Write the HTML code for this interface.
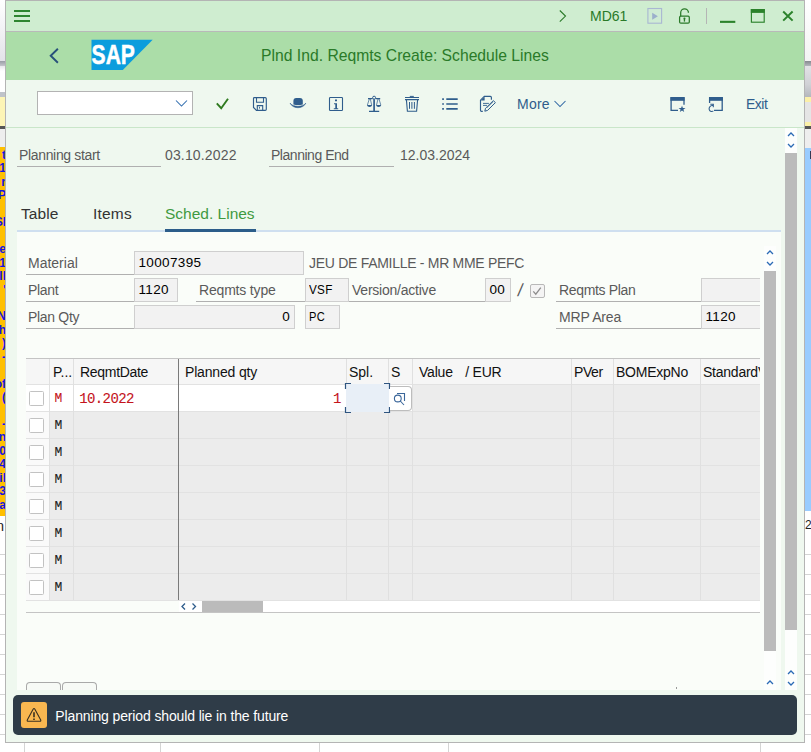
<!DOCTYPE html>
<html><head><meta charset="utf-8">
<style>
html,body{margin:0;padding:0;}
body{width:811px;height:752px;position:relative;overflow:hidden;background:#fff;font-family:"Liberation Sans",sans-serif;font-size:14px;color:#555;}
.a{position:absolute;}
.t{position:absolute;white-space:nowrap;line-height:16px;}
.lbl{color:#5a5a5a;}
.ul{position:absolute;height:1px;background:#b0b0b0;}
.fld{position:absolute;box-sizing:border-box;background:#f2f2f2;border:1px solid #cfcfcf;height:24px;color:#000;line-height:21.200px;padding:0 4px 0 3.500px;font-size:13.500px;letter-spacing:0.350px;white-space:nowrap;overflow:hidden;}
.hd{position:absolute;top:364.400px;color:#111;white-space:nowrap;line-height:16px;}
.m{position:absolute;left:54.600px;font-family:"Liberation Mono",monospace;font-size:13px;color:#111;line-height:16px;-webkit-text-stroke:0.100px currentColor;}
.cb{position:absolute;left:29px;width:14.500px;height:14.500px;box-sizing:border-box;border:1px solid #c2c2c2;border-radius:1.500px;background:#fff;}
.vl{position:absolute;width:1px;background:#e0e0e0;}
.hl{position:absolute;height:1px;background:#e2e2e2;}
</style></head><body>

<!-- ===== desktop background (spreadsheet) ===== -->
<div id="bg">
 <!-- left strip -->
 <div class="a" style="left:0;top:0;width:6px;height:62px;background:linear-gradient(#ffffff,#f4f4f7 40%,#e2e2e8)"></div>
 <div class="a" style="left:0;top:61px;width:6px;height:5px;background:linear-gradient(#9a9ea6,#c4c6cc)"></div>
 <div class="a" style="left:0;top:66px;width:6px;height:25px;background:linear-gradient(#e8e8ec,#ffffff 5px)"></div>
 <div class="a" style="left:0;top:91.500px;width:6px;height:6px;background:#bfc3c9"></div>
 <div class="a" style="left:0;top:97.300px;width:6px;height:29px;background:#fdf5b6"></div>
 <div class="a" style="left:0;top:126px;width:6px;height:3px;background:#555"></div>
 <div class="a" style="left:0;top:129px;width:6px;height:19px;background:#eee"></div>
 <div class="a" style="left:0;top:147.400px;width:6px;height:369.100px;background:#ffc000"></div>
 <!-- right strip -->
 <div class="a" style="left:804px;top:0;width:7px;height:62px;background:linear-gradient(#ffffff,#f3f3f3)"></div>
 <div class="a" style="left:804px;top:61px;width:7px;height:5px;background:linear-gradient(#85898f,#b3b6bc)"></div>
 <div class="a" style="left:804px;top:66px;width:7px;height:31px;background:linear-gradient(#e2e2e6,#d0d1d5 60%,#b4b7bd)"></div>
 <div class="a" style="left:804px;top:97px;width:7px;height:5px;background:#fbf0a8"></div>
 <div class="a" style="left:804px;top:102px;width:7px;height:20px;background:#e5e5e5"></div>
 <div class="a" style="left:804px;top:122px;width:7px;height:4px;background:#fbf0a8"></div>
 <div class="a" style="left:804px;top:126px;width:7px;height:3px;background:#555"></div>
 <div class="a" style="left:804px;top:129px;width:7px;height:19px;background:#eeeeee"></div>
 <div class="a" style="left:804px;top:147.500px;width:7px;height:363.500px;background:#99ccff"></div>
<div class="a" style="left:0;top:147px;width:5px;height:369px;overflow:hidden;font-weight:bold;font-size:12px;color:#1515e0;">
<div class="a" style="right:-1px;top:0.0px;line-height:16px;white-space:nowrap;">t</div>
<div class="a" style="right:-1px;top:13.4px;line-height:16px;white-space:nowrap;">.1</div>
<div class="a" style="right:-1px;top:26.9px;line-height:16px;white-space:nowrap;">r</div>
<div class="a" style="right:-1px;top:40.3px;line-height:16px;white-space:nowrap;">P</div>
<div class="a" style="right:-1px;top:67.2px;line-height:16px;white-space:nowrap;">SI</div>
<div class="a" style="right:-1px;top:94.1px;line-height:16px;white-space:nowrap;">e</div>
<div class="a" style="right:-1px;top:107.6px;line-height:16px;white-space:nowrap;">1</div>
<div class="a" style="right:-1px;top:121.1px;line-height:16px;white-space:nowrap;">ll</div>
<div class="a" style="right:-1px;top:134.5px;line-height:16px;white-space:nowrap;">'</div>
<div class="a" style="right:-1px;top:161.4px;line-height:16px;white-space:nowrap;">N</div>
<div class="a" style="right:-1px;top:174.9px;line-height:16px;white-space:nowrap;">h</div>
<div class="a" style="right:-1px;top:188.3px;line-height:16px;white-space:nowrap;">)</div>
<div class="a" style="right:-1px;top:201.8px;line-height:16px;white-space:nowrap;">-</div>
<div class="a" style="right:-1px;top:228.6px;line-height:16px;white-space:nowrap;">of</div>
<div class="a" style="right:-1px;top:242.1px;line-height:16px;white-space:nowrap;">(</div>
<div class="a" style="right:-1px;top:269.0px;line-height:16px;white-space:nowrap;">-</div>
<div class="a" style="right:-1px;top:282.4px;line-height:16px;white-space:nowrap;">n</div>
<div class="a" style="right:-1px;top:295.9px;line-height:16px;white-space:nowrap;">0</div>
<div class="a" style="right:-1px;top:309.3px;line-height:16px;white-space:nowrap;">4</div>
<div class="a" style="right:-1px;top:322.8px;line-height:16px;white-space:nowrap;">il</div>
<div class="a" style="right:-1px;top:336.2px;line-height:16px;white-space:nowrap;">3</div>
<div class="a" style="right:-1px;top:349.7px;line-height:16px;white-space:nowrap;">a</div>
</div>
<div class="a" style="left:0;top:518px;width:5px;height:16px;overflow:hidden;font-size:14px;color:#222;"><div class="a" style="right:1px;top:0;line-height:16px;">n</div></div>
<div class="a" style="left:805px;top:517px;width:6px;height:16px;overflow:hidden;font-size:12px;color:#222;"><div class="a" style="left:0px;top:0;line-height:16px;">20</div></div>
<div class="a" style="left:809.500px;top:151px;width:1.500px;height:8px;background:#333a55"></div>
</div>

<!-- ===== SAP window ===== -->
<div id="win" class="a" style="left:5px;top:0;width:800px;height:743px;box-sizing:border-box;border:1px solid #b4b4b4;background:#eff8ef;"></div>
<div class="a" style="left:6px;top:1px;width:798px;height:30px;background:#cfedd0"></div>
<div class="a" style="left:6px;top:31px;width:798px;height:1px;background:#b9b9b9"></div>
<div class="a" style="left:6px;top:32px;width:798px;height:48px;background:#abdda8"></div>
<div class="a" style="left:6px;top:127px;width:798px;height:1px;background:#c9e6c9"></div>


<!-- ===== title bar ===== -->
<svg class="a" style="left:0;top:0" width="811" height="32" viewBox="0 0 811 32">
 <g stroke="#2a7a28" stroke-width="1.6" fill="none">
  <path d="M14 11.100H30M14 16.100H30M14 21H30" stroke-width="2" stroke="#2e8530"/>
  <path d="M559.800 10.500L565.500 16.100L559.800 21.700" stroke-width="1.100"/>
 </g>
 <rect x="647.900" y="8.500" width="13.700" height="14.700" fill="#cfecd4" stroke="#a9b7d2" stroke-width="1.100"/>
 <path d="M652.200 12.700L657.900 16.200L652.200 19.800Z" fill="#9cb0cc"/>
 <g stroke="#2a7a28" fill="none" stroke-width="1.250">
  <rect x="679.600" y="16.200" width="9.700" height="6.900" rx="1.200"/>
  <path d="M680.700 16V12.700a3.850 3.850 0 0 1 7.700 0V11.600"/>
 </g>
 <circle cx="684.450" cy="18.600" r="1.050" fill="#2a7a28"/>
 <path d="M684.450 19V21.600" stroke="#2a7a28" stroke-width="1.300"/>
 <rect x="706" y="8" width="1" height="16" fill="#b5b5b5"/>
 <rect x="720" y="20.800" width="15.300" height="2.100" fill="#2b822b"/>
 <rect x="751.400" y="9.600" width="12.800" height="12.600" fill="none" stroke="#2b822b" stroke-width="1.150"/>
 <rect x="750.800" y="9" width="14" height="3.900" fill="#2b822b"/>
 <path d="M783.200 11.500L792.600 20.600M792.600 11.500L783.200 20.600" stroke="#2b822b" stroke-width="2" fill="none"/>
</svg>
<div class="t" style="left:590px;top:8px;color:#2a7a28;font-size:14px;">MD61</div>

<!-- ===== header ===== -->
<svg class="a" style="left:0;top:32px" width="811" height="48" viewBox="0 32 811 48">
 <path d="M57.900 48.800L50.700 55.800L57.900 62.800" stroke="#28507a" stroke-width="1.900" fill="none"/>
 <path d="M91.500 39.700H152.700L122.800 70H91.500Z" fill="#0b9ddd"/>
 <text x="91.600" y="64.100" font-family="Liberation Sans, sans-serif" font-weight="bold" font-size="26.800" fill="#fff" stroke="#fff" stroke-width="0.500" textLength="43.300" lengthAdjust="spacingAndGlyphs">SAP</text>
</svg>
<div class="t" style="left:6px;width:798px;top:46px;text-align:center;color:#2a7a28;font-size:15.7px;line-height:20px;">Plnd Ind. Reqmts Create: Schedule Lines</div>


<!-- ===== toolbar ===== -->
<div class="a" style="left:37px;top:91px;width:156px;height:24px;box-sizing:border-box;border:1px solid #b3b3b3;background:#fff;"></div>
<svg class="a" style="left:0;top:80px" width="811" height="48" viewBox="0 80 811 48">
 <path d="M176 100.500L181.500 106L187 100.500" stroke="#2f6cae" stroke-width="1.050" fill="none"/>
 <!-- check -->
 <path d="M216.800 103.400L221.200 108.200L228 98.700" stroke="#2f7a1f" stroke-width="1.900" fill="none"/>
 <g stroke="#2f5d8c" fill="none" stroke-width="1.2">
  <!-- save -->
  <path d="M254.300 97.600H265.200Q266.300 97.600 266.300 98.700V109.200Q266.300 110.300 265.200 110.300H256.400L253.500 107.400V98.400Q253.500 97.600 254.300 97.600Z" stroke-width="1.150"/>
  <path d="M256.500 97.600V102.300H263.500V97.600" stroke-width="1.100"/>
  <path d="M257.300 110.300V105.600H262.700V110.300" stroke-width="1.100"/>
  <path d="M259.500 106.800V108.600" stroke-width="0.900"/>
  <!-- info -->
  <rect x="329.500" y="97.500" width="13" height="13" rx="0.800" stroke-width="1.100"/>
  <!-- scale -->
  <path d="M374.100 99.300V111" stroke-width="1.700"/>
  <path d="M369 111.300H379.200M368 98.600H372.600M375.600 98.600H380.200" stroke-width="1.200"/>
  <circle cx="374.100" cy="97.700" r="1.500" stroke-width="1"/>
  <path d="M369.300 99L367.400 105M370.300 99L371.700 105M378 99L376.500 105M379 99L380.800 105" stroke-width="0.700"/>
  <!-- trash -->
  <path d="M405 97.500H419M405 99.600H419" stroke-width="1.100"/>
  <path d="M409.800 96.400H413.800" stroke-width="1"/>
  <path d="M406.400 99.600L407.400 111.300H416.600L417.600 99.600" stroke-width="1.100"/>
  <path d="M409.500 102V108.800M411.900 102V108.800M414.400 102V108.800" stroke-width="1"/>
  <!-- list -->
  <path d="M446.300 99.200H457.700M446.300 104H457.700M446.300 108.800H457.700" stroke-width="1.700"/>
  <path d="M442.200 99.200H443.900M442.200 104H443.900M442.200 108.800H443.900" stroke-width="1.700"/>
  <!-- doc edit -->
  <path d="M491.400 99.800V97.400Q491.400 96.400 490.400 96.400H484.300L480.500 100.200V110.300Q480.500 111.300 481.500 111.300H482.800" stroke-width="1.150"/>
  <path d="M484.600 96.800V100.500H480.900Z" fill="#2f5d8c" stroke="none"/>
  <path d="M483 103.400H488.900M483 105.400H487" stroke-width="0.900"/>
  <path d="M484.800 111.200L485.500 108.300L493.300 100.600L495.400 102.600L487.600 110.400Z" stroke-width="1" stroke-linejoin="round"/>
  <path d="M487 107.800L493.200 101.800" stroke-width="0.600"/>
  <!-- more chevron -->
  <path d="M554.500 101L560 106.600L565.500 101" stroke-width="1.050" stroke="#2f66a3"/>
  <!-- window star -->
  <path d="M678 110.400H671.100V98H684V104.700" stroke-width="1.300"/>
  <!-- window refresh -->
  <path d="M714 110.400H722.200V98H709.600V103" stroke-width="1.300"/>
  <path d="M712.800 105.200C709.500 105.300 708.200 108.800 709.700 110.600C710.700 111.800 712.300 111.800 713.300 110.900M710.300 104.300H713.300V107.300" stroke-width="1.100"/>
 </g>
 <rect x="670.400" y="97" width="14.200" height="3.800" fill="#2f5d8c"/>
 <rect x="709" y="97" width="13.900" height="3.800" fill="#2f5d8c"/>
 <path d="M682 105.700L682.900 108.100H685.500L683.400 109.600L684.200 112L682 110.500L679.800 112L680.600 109.600L678.500 108.100H681.100Z" fill="#2f5d8c"/>
 <!-- hat -->
 <path d="M293.400 104.300V100.800Q293.400 97.900 296.300 97.900H299.900Q302.800 97.900 302.800 100.800V104.600Q298.100 105.600 293.400 104.600Z" fill="#2f5d8c"/>
 <path d="M290 103C292.500 109.300 303.400 109.300 305.900 103C303.400 107.300 292.500 107.300 290 103Z" fill="#2f5d8c" stroke="#2f5d8c" stroke-width="0.500" stroke-linejoin="round"/>
 <path d="M367 105H372.100C371.800 107.600 367.300 107.600 367 105ZM376.100 105H381.200C380.900 107.600 376.400 107.600 376.100 105Z" fill="#2f5d8c"/>
 <!-- info i -->
 <path d="M335 99.400H337V101.200H335ZM334 103.200H337V108.200H338.200V109.200H333.800V108.200H335.300V104.200H334Z" fill="#2f5d8c"/>
</svg>
<div class="t" style="left:517px;top:96px;color:#2f5d8c;font-size:14px;letter-spacing:0.250px;">More</div>
<div class="t" style="left:746px;top:96px;color:#2f5d8c;font-size:14px;letter-spacing:-0.5px;">Exit</div>

<!-- ===== outer scrollbar ===== -->
<div class="a" style="left:785px;top:128px;width:12px;height:562px;background:#fdfefd"></div>
<div class="a" style="left:785px;top:153px;width:12px;height:477px;background:#bbbbbb"></div>
<svg class="a" style="left:785px;top:128px" width="12" height="562" viewBox="0 0 12 562">
 <g stroke="#2a6ab5" stroke-width="1.300" fill="none">
  <path d="M3 8L6 5L9 8M3 16L6 19L9 16"/>
  <path d="M3 546L6 543L9 546M3 554L6 557L9 554"/>
 </g>
</svg>

<!-- ===== top fields ===== -->
<div class="t lbl" style="left:19px;top:147px;letter-spacing:-0.34px;">Planning start</div>
<div class="ul" style="left:17px;top:166px;width:144px;"></div>
<div class="t lbl" style="left:165px;top:147px;letter-spacing:0.15px;">03.10.2022</div>
<div class="t lbl" style="left:271px;top:147px;letter-spacing:-0.47px;">Planning End</div>
<div class="ul" style="left:269px;top:166px;width:125px;"></div>
<div class="t lbl" style="left:400px;top:147px;">12.03.2024</div>

<!-- ===== tabs ===== -->
<div class="t" style="left:21px;top:205px;font-size:15.500px;color:#333;line-height:18px;letter-spacing:0.100px;">Table</div>
<div class="t" style="left:93px;top:205px;font-size:15.500px;color:#333;line-height:18px;letter-spacing:0.200px;">Items</div>
<div class="t" style="left:165px;top:205px;font-size:15.500px;color:#3f9a3f;line-height:18px;">Sched. Lines</div>

<!-- ===== tab panel ===== -->
<div class="a" style="left:17px;top:231px;width:764px;height:459px;background:#fafdf9"></div>
<div class="a" style="left:17px;top:230px;width:764px;height:2px;background:#cfdff0"></div>
<div class="a" style="left:165px;top:229px;width:91px;height:3px;background:#2c5d8a"></div>


<!-- ===== inner scrollbar ===== -->
<div class="a" style="left:764px;top:246px;width:12px;height:444px;background:#fdfefd"></div>
<div class="a" style="left:764px;top:271px;width:12px;height:380px;background:#bbbbbb"></div>
<svg class="a" style="left:764px;top:246px" width="12" height="444" viewBox="0 0 12 444">
 <g stroke="#2a6ab5" stroke-width="1.300" fill="none">
  <path d="M3 8L6 5L9 8M3 16L6 19L9 16"/>
  <path d="M3 438L6 435L9 438"/>
 </g>
</svg>

<!-- ===== form ===== -->
<div class="t lbl" style="left:28px;top:255px;">Material</div>
<div class="ul" style="left:26px;top:274px;width:108px;"></div>
<div class="fld" style="left:134px;top:251px;width:170px;">10007395</div>
<div class="t lbl" style="left:309px;top:255px;letter-spacing:-0.29px;">JEU DE FAMILLE - MR MME PEFC</div>

<div class="t lbl" style="left:28px;top:282px;letter-spacing:-0.34px;">Plant</div>
<div class="ul" style="left:26px;top:301px;width:108px;"></div>
<div class="fld" style="left:134px;top:278px;width:44px;">1120</div>
<div class="t lbl" style="left:199px;top:282px;letter-spacing:-0.18px;">Reqmts type</div>
<div class="ul" style="left:196px;top:301px;width:109px;"></div>
<div class="fld" style="left:305px;top:278px;width:44px;"><span style="display:inline-block;font-size:12.300px;position:relative;top:-0.400px;left:-0.800px;transform:scaleX(0.950);transform-origin:0 50%;">VSF</span></div>
<div class="t lbl" style="left:352px;top:282px;letter-spacing:-0.23px;">Version/active</div>
<div class="ul" style="left:349px;top:301px;width:136px;"></div>
<div class="fld" style="left:485px;top:278px;width:26px;">00</div>
<div class="t lbl" style="left:517.500px;top:281px;font-size:17.500px;line-height:18px;transform:skewX(-9deg);transform-origin:50% 50%;">/</div>
<div class="a" style="left:530px;top:283.500px;width:14.600px;height:14.600px;box-sizing:border-box;border:1px solid #b8b8b8;border-radius:2px;background:#f4f4f4;"></div>
<svg class="a" style="left:530px;top:284px" width="14" height="14" viewBox="0 0 14 14"><path d="M3.300 7.300L5.800 10.200L10.800 3.600" stroke="#8d8d8d" stroke-width="1.300" fill="none"/></svg>
<div class="t lbl" style="left:559px;top:282px;letter-spacing:-0.34px;">Reqmts Plan</div>
<div class="ul" style="left:556px;top:301px;width:145px;"></div>
<div class="fld" style="left:701px;top:278px;width:59px;border-right:none;"></div>

<div class="t lbl" style="left:28px;top:309px;letter-spacing:-0.31px;">Plan Qty</div>
<div class="ul" style="left:26px;top:328px;width:108px;"></div>
<div class="fld" style="left:134px;top:305px;width:161px;text-align:right;">0</div>
<div class="fld" style="left:305px;top:305px;width:35px;"><span style="display:inline-block;font-size:12.300px;position:relative;top:-0.400px;left:-0.800px;transform:scaleX(0.900);transform-origin:0 50%;">PC</span></div>
<div class="t lbl" style="left:559px;top:309px;letter-spacing:-0.19px;">MRP Area</div>
<div class="ul" style="left:556px;top:328px;width:145px;"></div>
<div class="fld" style="left:701px;top:305px;width:59px;border-right:none;">1120</div>

<!-- ===== table ===== -->
<div class="a" style="left:26px;top:358px;width:734px;height:1px;background:#c4c4c4"></div>
<div class="a" style="left:26px;top:359px;width:734px;height:25px;background:#f6f6f6"></div>
<div class="hl" style="left:26px;top:384px;width:734px;"></div>
<div class="a" style="left:26px;top:385px;width:386px;height:26px;background:#fff"></div>
<div class="a" style="left:412px;top:385px;width:348px;height:26px;background:#ececec"></div>
<div class="hl" style="left:26px;top:411px;width:734px;"></div>
<div class="cb" style="top:391px"></div>
<div class="m" style="top:390.8px;color:#c4141c">M</div>
<div class="a" style="left:26px;top:412px;width:23px;height:26px;background:#fafafa"></div>
<div class="a" style="left:49px;top:412px;width:711px;height:26px;background:#ececec"></div>
<div class="hl" style="left:26px;top:438px;width:734px;"></div>
<div class="cb" style="top:418px"></div>
<div class="m" style="top:417.8px;color:#222">M</div>
<div class="a" style="left:26px;top:439px;width:23px;height:26px;background:#fafafa"></div>
<div class="a" style="left:49px;top:439px;width:711px;height:26px;background:#ececec"></div>
<div class="hl" style="left:26px;top:465px;width:734px;"></div>
<div class="cb" style="top:445px"></div>
<div class="m" style="top:444.8px;color:#222">M</div>
<div class="a" style="left:26px;top:466px;width:23px;height:26px;background:#fafafa"></div>
<div class="a" style="left:49px;top:466px;width:711px;height:26px;background:#ececec"></div>
<div class="hl" style="left:26px;top:492px;width:734px;"></div>
<div class="cb" style="top:472px"></div>
<div class="m" style="top:471.8px;color:#222">M</div>
<div class="a" style="left:26px;top:493px;width:23px;height:26px;background:#fafafa"></div>
<div class="a" style="left:49px;top:493px;width:711px;height:26px;background:#ececec"></div>
<div class="hl" style="left:26px;top:519px;width:734px;"></div>
<div class="cb" style="top:499px"></div>
<div class="m" style="top:498.8px;color:#222">M</div>
<div class="a" style="left:26px;top:520px;width:23px;height:26px;background:#fafafa"></div>
<div class="a" style="left:49px;top:520px;width:711px;height:26px;background:#ececec"></div>
<div class="hl" style="left:26px;top:546px;width:734px;"></div>
<div class="cb" style="top:526px"></div>
<div class="m" style="top:525.8px;color:#222">M</div>
<div class="a" style="left:26px;top:547px;width:23px;height:26px;background:#fafafa"></div>
<div class="a" style="left:49px;top:547px;width:711px;height:26px;background:#ececec"></div>
<div class="hl" style="left:26px;top:573px;width:734px;"></div>
<div class="cb" style="top:553px"></div>
<div class="m" style="top:552.8px;color:#222">M</div>
<div class="a" style="left:26px;top:574px;width:23px;height:26px;background:#fafafa"></div>
<div class="a" style="left:49px;top:574px;width:711px;height:26px;background:#ececec"></div>
<div class="hl" style="left:26px;top:600px;width:734px;"></div>
<div class="cb" style="top:580px"></div>
<div class="m" style="top:579.8px;color:#222">M</div>

<div class="vl" style="left:49px;top:359px;height:241px;"></div>
<div class="vl" style="left:73px;top:359px;height:241px;"></div>
<div class="vl" style="left:346px;top:359px;height:241px;"></div>
<div class="vl" style="left:388px;top:359px;height:241px;"></div>
<div class="vl" style="left:412px;top:359px;height:241px;"></div>
<div class="vl" style="left:571px;top:359px;height:241px;"></div>
<div class="vl" style="left:613px;top:359px;height:241px;"></div>
<div class="vl" style="left:700px;top:359px;height:241px;"></div>

<div class="a" style="left:178px;top:359px;width:1px;height:241px;background:#7a7a7a"></div>
<div class="hd" style="left:53px;">P...</div>
<div class="hd" style="left:80px;letter-spacing:-0.3px;">ReqmtDate</div>
<div class="hd" style="left:185px;letter-spacing:-0.17px;">Planned qty</div>
<div class="hd" style="left:349px;">Spl.</div>
<div class="hd" style="left:391px;">S</div>
<div class="hd" style="left:419px;letter-spacing:-0.200px;">Value</div><div class="hd" style="left:465.300px;letter-spacing:-0.250px;">/ EUR</div>
<div class="hd" style="left:574px;letter-spacing:-0.4px;">PVer</div>
<div class="hd" style="left:616px;letter-spacing:-0.24px;">BOMExpNo</div>
<div class="hd" style="left:703px;width:57px;overflow:hidden;letter-spacing:-0.24px;">StandardV</div>
<div class="m" style="left:79.200px;top:390.500px;color:#c4141c;font-size:14px;letter-spacing:-0.600px;">10.2022</div>
<div class="m" style="left:333px;top:390.500px;color:#c4141c;font-size:14px;">1</div>
<!-- focus cell -->
<div class="a" style="left:346px;top:384px;width:43px;height:28px;background:#e8eff7"></div>
<svg class="a" style="left:344px;top:382px" width="48" height="32" viewBox="344 382 48 32">
 <path d="M345.500 389V383.500H351M384 383.500H389.500V389M389.500 407V412.500H384M351 412.500H345.500V407" stroke="#2f5580" stroke-width="1.200" fill="none"/>
</svg>
<div class="a" style="left:390px;top:385.500px;width:22px;height:25.500px;box-sizing:border-box;border:1px solid #bdbdbd;border-left:none;border-radius:0 4px 4px 0;background:#fff"></div>
<svg class="a" style="left:390px;top:386px" width="22" height="25" viewBox="390 386 22 25">
 <g stroke="#3a669a" stroke-width="1.100" fill="none">
  <path d="M397 393.500H404.500V401"/>
  <circle cx="397.800" cy="398.500" r="3.400" fill="#fff"/>
  <path d="M400.300 401L404 405"/>
 </g>
</svg>

<!-- hscroll -->
<div class="a" style="left:179px;top:601px;width:581px;height:11px;background:#fff"></div>
<div class="a" style="left:202px;top:601px;width:61px;height:11px;background:#bbbbbb"></div>
<svg class="a" style="left:179px;top:601px" width="22" height="11" viewBox="179 601 22 11">
 <path d="M185 603.500L182 606.500L185 609.500M192.500 603.500L195.500 606.500L192.500 609.500" stroke="#2f5d8c" stroke-width="1.300" fill="none"/>
</svg>
<div class="a" style="left:26px;top:612px;width:734px;height:1px;background:#c4c4c4"></div>

<!-- bottom buttons (clipped) -->
<div class="a" style="left:26px;top:682px;width:35px;height:8px;box-sizing:border-box;border:1px solid #a9a9a9;border-bottom:none;border-radius:4px 4px 0 0;background:#f7faf6"></div>
<div class="a" style="left:62px;top:682px;width:35px;height:8px;box-sizing:border-box;border:1px solid #a9a9a9;border-bottom:none;border-radius:4px 4px 0 0;background:#f7faf6"></div>

<div class="a" style="left:676px;top:687px;width:1px;height:2px;background:#9a9a9a"></div>
<!-- ===== status bar ===== -->
<div class="a" style="left:13px;top:695px;width:784px;height:40px;background:#2f3c48;border-radius:5px;"></div>
<div class="a" style="left:21px;top:702px;width:26px;height:26px;background:#f9b750;border-radius:3px;"></div>
<svg class="a" style="left:21px;top:702px" width="26" height="26" viewBox="0 0 26 26">
 <path d="M12.100 7.300Q13 5.800 13.900 7.300L19.600 17.800Q20.300 19.300 18.800 19.300H7.200Q5.700 19.300 6.400 17.800Z" stroke="#3a3020" stroke-width="1.100" fill="none" stroke-linejoin="round"/>
 <path d="M13 10.300V15.200M13 16.400V17.900" stroke="#3a3020" stroke-width="1.600"/>
</svg>
<div class="t" style="left:55.300px;top:707.500px;color:#fff;font-size:14px;letter-spacing:-0.13px;">Planning period should lie in the future</div>

<div class="a" style="left:0;top:554px;width:5px;height:1px;background:#d4d4d4"></div>
<div class="a" style="left:805px;top:554px;width:6px;height:1px;background:#d4d4d4"></div>
<div class="a" style="left:0;top:574px;width:5px;height:1px;background:#d4d4d4"></div>
<div class="a" style="left:805px;top:574px;width:6px;height:1px;background:#d4d4d4"></div>
<div class="a" style="left:0;top:594px;width:5px;height:1px;background:#d4d4d4"></div>
<div class="a" style="left:805px;top:594px;width:6px;height:1px;background:#d4d4d4"></div>
<div class="a" style="left:0;top:614px;width:5px;height:1px;background:#d4d4d4"></div>
<div class="a" style="left:805px;top:614px;width:6px;height:1px;background:#d4d4d4"></div>
<div class="a" style="left:0;top:634px;width:5px;height:1px;background:#d4d4d4"></div>
<div class="a" style="left:805px;top:634px;width:6px;height:1px;background:#d4d4d4"></div>
<div class="a" style="left:0;top:654px;width:5px;height:1px;background:#d4d4d4"></div>
<div class="a" style="left:805px;top:654px;width:6px;height:1px;background:#d4d4d4"></div>
<div class="a" style="left:0;top:674px;width:5px;height:1px;background:#d4d4d4"></div>
<div class="a" style="left:805px;top:674px;width:6px;height:1px;background:#d4d4d4"></div>
<div class="a" style="left:0;top:694px;width:5px;height:1px;background:#d4d4d4"></div>
<div class="a" style="left:805px;top:694px;width:6px;height:1px;background:#d4d4d4"></div>
<div class="a" style="left:0;top:714px;width:5px;height:1px;background:#d4d4d4"></div>
<div class="a" style="left:805px;top:714px;width:6px;height:1px;background:#d4d4d4"></div>
<div class="a" style="left:0;top:734px;width:5px;height:1px;background:#d4d4d4"></div>
<div class="a" style="left:805px;top:734px;width:6px;height:1px;background:#d4d4d4"></div>
<div class="a" style="left:24px;top:743px;width:1px;height:9px;background:#d4d4d4"></div>
<div class="a" style="left:160px;top:743px;width:1px;height:9px;background:#d4d4d4"></div>
<div class="a" style="left:319px;top:743px;width:1px;height:9px;background:#d4d4d4"></div>
<div class="a" style="left:448px;top:743px;width:1px;height:9px;background:#d4d4d4"></div>
<div class="a" style="left:760px;top:743px;width:1px;height:9px;background:#d4d4d4"></div>


</body></html>
